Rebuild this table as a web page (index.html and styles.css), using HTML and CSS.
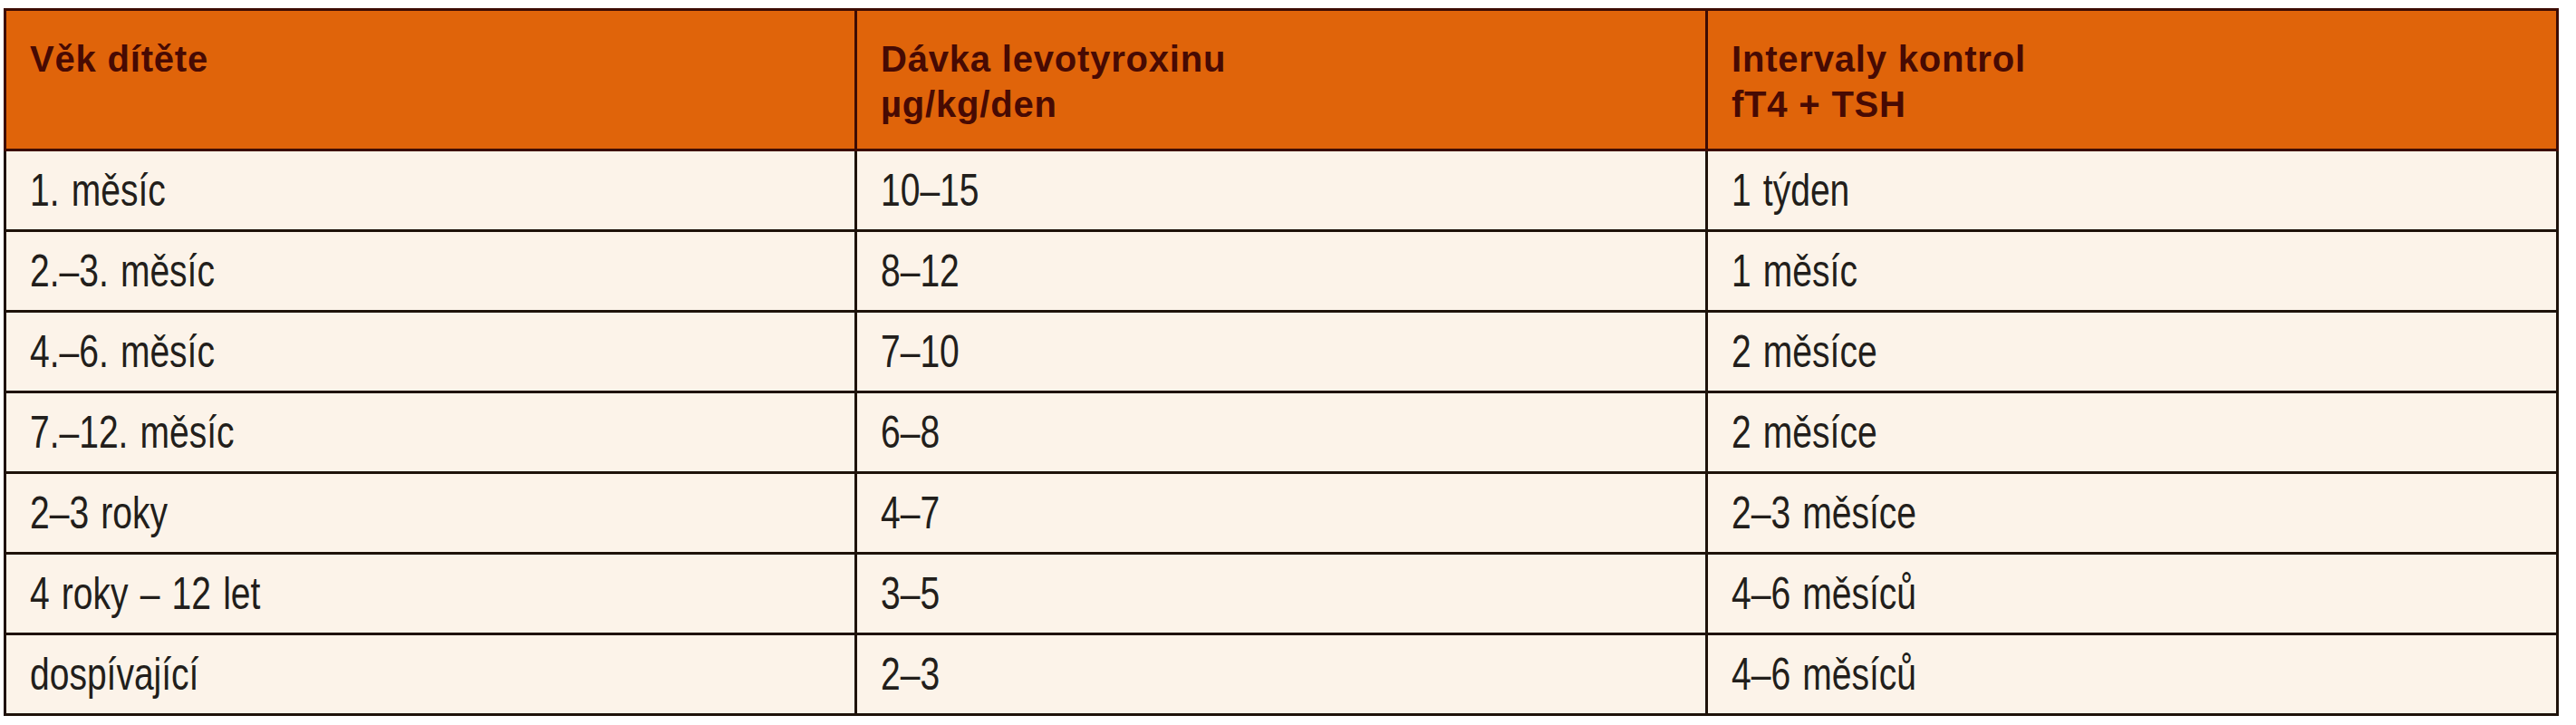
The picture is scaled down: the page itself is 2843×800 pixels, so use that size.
FILE: index.html
```html
<!DOCTYPE html>
<html lang="cs">
<head>
<meta charset="utf-8">
<title>Dávkování levotyroxinu</title>
<link rel="stylesheet" href="styles.css">
</head>
<body>
<table class="dose-table">
  <colgroup>
    <col class="col">
    <col class="col">
    <col class="col">
  </colgroup>
  <thead>
    <tr class="head-row">
      <th>Věk dítěte</th>
      <th>Dávka levotyroxinu<br>µg/kg/den</th>
      <th>Intervaly kontrol<br>fT4 + TSH</th>
    </tr>
  </thead>
  <tbody>
    <tr><td><span class="txt">1. měsíc</span></td><td><span class="txt">10–15</span></td><td><span class="txt">1 týden</span></td></tr>
    <tr><td><span class="txt">2.–3. měsíc</span></td><td><span class="txt">8–12</span></td><td><span class="txt">1 měsíc</span></td></tr>
    <tr><td><span class="txt">4.–6. měsíc</span></td><td><span class="txt">7–10</span></td><td><span class="txt">2 měsíce</span></td></tr>
    <tr><td><span class="txt">7.–12. měsíc</span></td><td><span class="txt">6–8</span></td><td><span class="txt">2 měsíce</span></td></tr>
    <tr><td><span class="txt">2–3 roky</span></td><td><span class="txt">4–7</span></td><td><span class="txt">2–3 měsíce</span></td></tr>
    <tr><td><span class="txt">4 roky – 12 let</span></td><td><span class="txt">3–5</span></td><td><span class="txt">4–6 měsíců</span></td></tr>
    <tr><td><span class="txt">dospívající</span></td><td><span class="txt">2–3</span></td><td><span class="txt">4–6 měsíců</span></td></tr>
  </tbody>
</table>
</body>
</html>
```
FILE: styles.css
```css
html, body {
  margin: 0;
  padding: 0;
  background: #ffffff;
}

body {
  padding: 9px 0 0 4px;
  font-family: "Liberation Sans", Arial, sans-serif;
}

.dose-table {
  width: 2820px;
  border-collapse: collapse;
  table-layout: fixed;
  border: 3px solid #1e120a;
  background: #fcf3e9;
}

.col {
  width: 33.333%;
}

.dose-table th,
.dose-table td {
  border: 3px solid #1e120a;
  text-align: left;
  padding: 0 0 0 26px;
}

.head-row {
  height: 155px;
  background: #e0640a;
}

.dose-table th {
  border-color: #3d0c04;
  color: #470a03;
  font-weight: 700;
  font-size: 40px;
  line-height: 50px;
  letter-spacing: 0.8px;
  vertical-align: top;
  padding-top: 28px;
}

.dose-table tbody tr {
  height: 89px;
}

.dose-table td {
  color: #221e1b;
  font-size: 50px;
  line-height: 56px;
  vertical-align: middle;
  white-space: nowrap;
}

.txt {
  display: inline-block;
  transform: scaleX(0.78);
  transform-origin: left center;
  word-spacing: 3px;
}
```
